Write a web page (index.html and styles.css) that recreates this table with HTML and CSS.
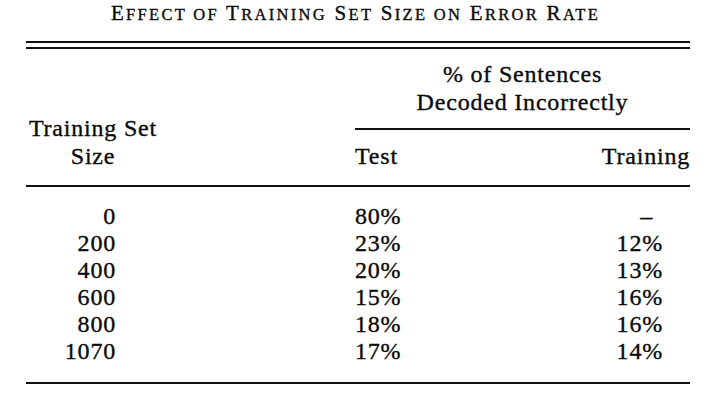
FILE: index.html
```html
<!DOCTYPE html>
<html lang="en">
<head>
<meta charset="utf-8">
<title>Effect of Training Set Size on Error Rate</title>
<link rel="stylesheet" href="styles.css">
</head>
<body>
<div class="page">
  <h1 class="title">E<span class="sc">ffect of</span> T<span class="sc">raining</span> S<span class="sc">et</span> S<span class="sc">ize on</span> E<span class="sc">rror</span> R<span class="sc">ate</span></h1>
  <div class="table">
    <div class="dbl"></div>
    <div class="head">
      <div class="h-size">Training Set<br>Size</div>
      <div class="h-span">% of Sentences<br>Decoded Incorrectly</div>
      <div class="h-test">Test</div>
      <div class="h-train">Training</div>
    </div>
    <div class="rows">
      <div class="row"><span class="c-size">0</span><span class="c-test">80%</span><span class="c-train c-dash">–</span></div>
      <div class="row"><span class="c-size">200</span><span class="c-test">23%</span><span class="c-train">12%</span></div>
      <div class="row"><span class="c-size">400</span><span class="c-test">20%</span><span class="c-train">13%</span></div>
      <div class="row"><span class="c-size">600</span><span class="c-test">15%</span><span class="c-train">16%</span></div>
      <div class="row"><span class="c-size">800</span><span class="c-test">18%</span><span class="c-train">16%</span></div>
      <div class="row"><span class="c-size">1070</span><span class="c-test">17%</span><span class="c-train">14%</span></div>
    </div>
  </div>
</div>
</body>
</html>
```
FILE: styles.css
```css
html, body {
  margin: 0;
  padding: 0;
  background: #ffffff;
}

body {
  font-family: "Liberation Serif", "Times New Roman", serif;
  color: #0a0a0a;
  -webkit-text-stroke: 0.35px #0a0a0a;
}

.page {
  padding-top: 1px;
}

.title {
  margin: 0;
  font-size: 21px;
  line-height: 24px;
  font-weight: normal;
  text-align: center;
  letter-spacing: 2.3px;
}

.sc {
  font-size: 16.5px;
  text-transform: uppercase;
}

.table {
  margin: 14px 21px 0 26px;
  font-size: 24px;
  letter-spacing: 0.8px;
}

.dbl {
  height: 4px;
  border-top: 2px solid #111111;
  border-bottom: 2px solid #111111;
}

.head {
  display: grid;
  grid-template-columns: 134px 195px 1fr 1fr;
  padding-top: 11px;
  padding-bottom: 15px;
  border-bottom: 2px solid #111111;
  line-height: 28px;
}

.h-size {
  grid-column: 1;
  grid-row: 1 / span 2;
  align-self: end;
  text-align: center;
}

.h-span {
  grid-column: 3 / span 2;
  grid-row: 1;
  text-align: center;
  padding-bottom: 12px;
  border-bottom: 2px solid #111111;
}

.h-test {
  grid-column: 3;
  grid-row: 2;
  padding-top: 12px;
}

.h-train {
  grid-column: 4;
  grid-row: 2;
  padding-top: 12px;
  text-align: right;
}

.rows {
  padding: 16px 0 17px;
  border-bottom: 2px solid #111111;
}

.row {
  display: grid;
  grid-template-columns: 134px 195px 1fr 1fr;
  line-height: 27px;
}

.c-size {
  grid-column: 1;
  text-align: right;
  padding-right: 44px;
}

.c-test {
  grid-column: 3;
}

.c-train {
  grid-column: 4;
  text-align: right;
  padding-right: 27px;
}

.c-dash {
  padding-right: 37px;
}
```
